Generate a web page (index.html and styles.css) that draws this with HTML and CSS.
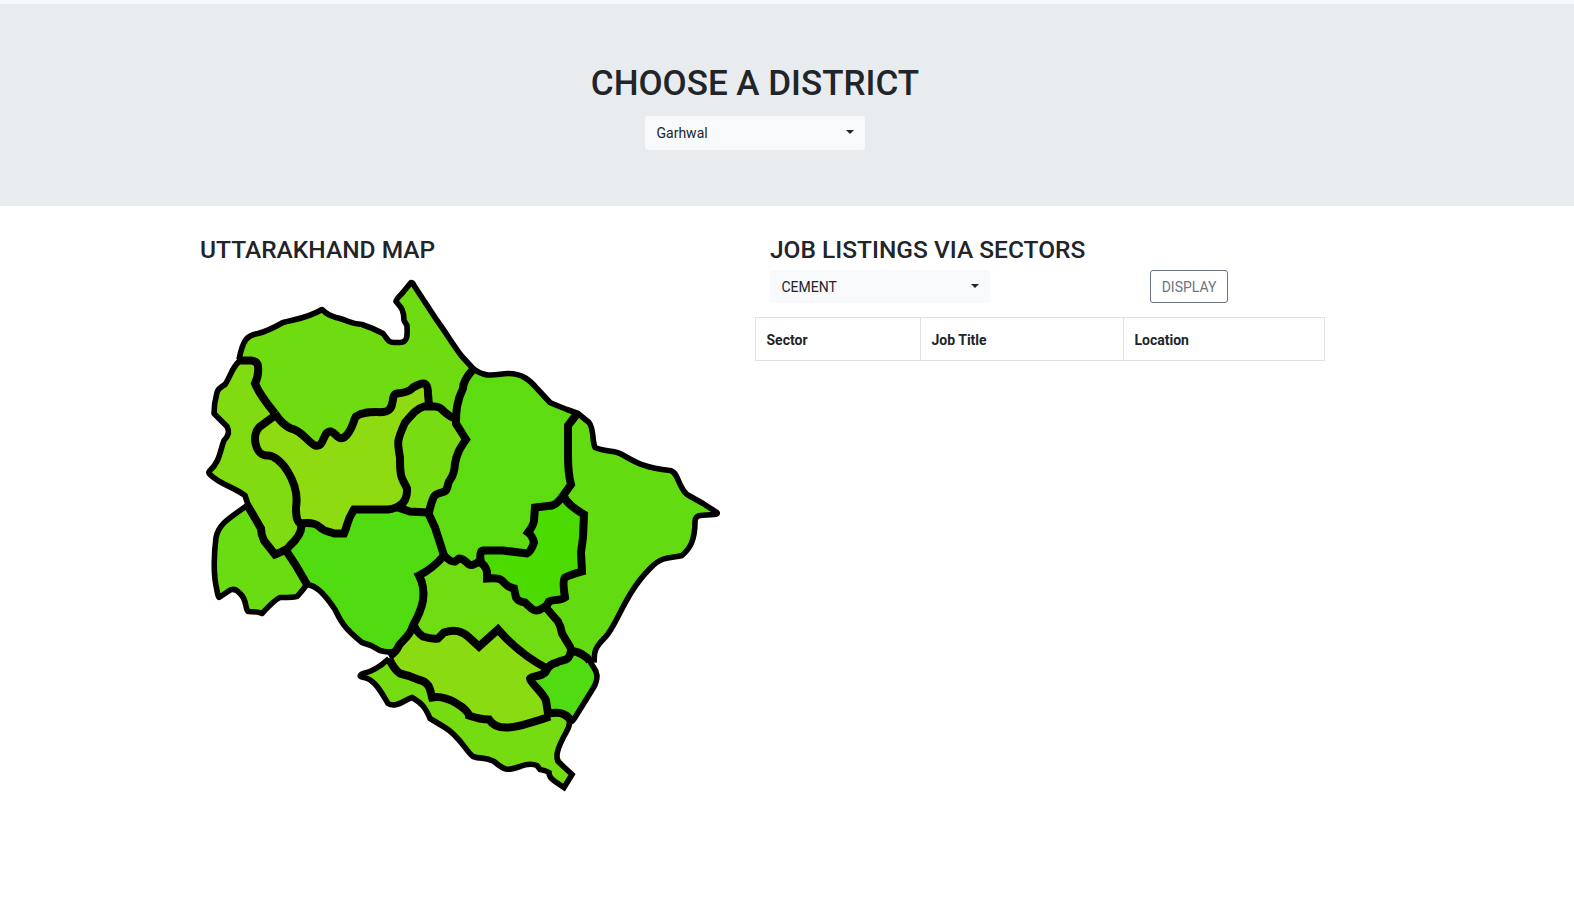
FILE: index.html
```html
<!DOCTYPE html>
<html lang="en">
<head>
<meta charset="utf-8">
<title>Uttarakhand Jobs</title>
<link rel="stylesheet" href="styles.css">
</head>
<body>
<header class="hero">
  <div class="container hero-inner">
    <h1 class="hero-title">CHOOSE A DISTRICT</h1>
    <button class="select">Garhwal<span class="caret"></span></button>
  </div>
</header>
<main class="container columns">
  <section class="map-col">
    <h3 class="title">UTTARAKHAND MAP</h3>
    <svg class="map" viewBox="200 269.5 530 530" width="530" height="530">
      <g>
        <path fill="#6edc10" d="M239 360L243 345 246 339 251 335 258 333 273 328 283 322 300 319 322 309 332 316 340 318 351 322 362 324 383 333 388 339 394 342 402 342 407 332 407 325 403 313 396 301 411 282 437 320 462 357 473 369 465 382 458 400 457 418 437 406 428 405 428 393 421 382 405 391 395 393 390 408 360 413 352 427 340 438 331 430 317 445 297 429 275 413 255 383 258 363Z"/>
        <path fill="#80db11" d="M239 360L253 361 258 363 255 383 275 413 258 428 254 443 263 454 278 461 294 487 297 520 301 525 290 545 275 554 262 537 262 528 248 505 245 495 217 479 209 472 217 462 224 438 228 430 214 413 217 392 225 384Z"/>
        <path fill="#8fdb11" d="M275 413L297 429 317 445 331 430 340 438 352 427 354 417 372 411 390 408 395 393 405 391 421 382 428 393 428 406 415 411 405 422 398 445 401 473 407 488 398 508 354 509 344 533 323 529 300 523 297 520 294 487 278 461 263 454 254 443 258 428Z"/>
        <path fill="#78dc12" d="M457 418L442 408 423 406 415 411 405 422 398 445 401 473 407 488 407 498 398 508 428 512 435 494 447 490 457 455 466 440 455 423Z"/>
        <path fill="#5cdc11" d="M473 369L479 373 493 375 508 373 527 378 550 402 578 413 568 425 568 467 572 482 560 499 535 507 534 523 528 532 534 542 527 553 485 549 480 562 472 566 444 555 428 512 435 494 447 490 457 455 466 440 455 423 458 400Z"/>
        <path fill="#62dc11" d="M578 413L590 423 594 445 620 453 650 467 674 472 687 494 717 512 698 515 694 533 687 550 682 555 665 557 640 578 617 617 598 645 594 662 571 649 560 623 545 606 565 598 563 580 582 572 584 514 564 497 572 482 568 425Z"/>
        <path fill="#4bdb00" d="M564 497L584 514 581 552 582 572 563 580 565 598 550 600 537 611 517 599 513 587 500 578 487 577 480 562 480 552 485 549 527 553 534 542 528 532 535 507Z"/>
        <path fill="#50dc11" d="M301 525L315 523 344 533 354 509 398 508 428 512 444 555 419 575 423 600 410 632 393 653 380 650 362 642 338 617 322 593 307 584 286 550Z"/>
        <path fill="#6adc12" d="M247 505L262 537 275 554 286 550 307 584 297 596 280 597 262 613 248 611 245 600 234 589 218 596 214 557 220 528Z"/>
        <path fill="#70dc12" d="M444 555L472 566 480 562 487 577 500 578 513 587 517 599 537 611 545 606 560 623 571 649 567 657 547 667 517 648 498 630 479 647 458 631 445 631 438 638 425 636 413 625 423 600 419 575Z"/>
        <path fill="#8adb12" d="M413 625L425 636 438 638 445 631 458 631 479 647 498 630 517 648 547 667 544 673 531 678 547 703 549 715 515 727 498 726 488 718 470 716 450 699 432 696 430 685 400 673 390 657Z"/>
        <path fill="#50dc11" d="M571 649L592 662 597 678 593 688 571 722 563 713 549 713 531 680 544 673 548 667Z"/>
        <path fill="#75dc11" d="M390 657L400 673 430 685 432 696 450 699 470 716 488 718 498 726 515 727 549 713 563 713 570 722 557 753 572 774 564 787 549 773 530 764 508 769 490 759 473 756 445 727 430 718 412 697 392 705 378 688 361 676Z"/>
      </g>
      <g class="outline">
        <path d="M239 359Q242 344 246 339Q250 334 258 333Q267 331 283 322C294 319 307 318 322 309C330 317 334 316 340 318C352 322 351 323 362 324Q374 328 383 333C388 339 388 342 394 342H400C409 342 407 331 407 325L404 320C404 308 400 306 396 301Q396 299 402 293L411 282Q413 282 414 285L437 320C446 332 452 343 462 356L473 368C486 378 494 374 508 373C523 373 530 380 537 388L550 402Q552 403 557 405L567 409 578 413 589 422C594 428 592 440 595 447C603 451 614 450 620 453C632 459 640 467 670 470C678 471 678 486 687 494L703 503 717 512Q718 514 714 514L700 515Q695 516 695 521C695 540 690 548 682 555C673 558 663 554 650 568C624 594 617 625 605 637C592 650 595 653 594 662"/>
        <path d="M590 660C592 667 596 667 597 675Q597 682 593 688L575 717Q572 722 570 721"/>
        <path class="sharp" d="M569 718Q571 724 566 732C556 750 556 756 558 761L572 774 564 787 555 781Q549 777 549 772Q546 770 540 769L537 765Q530 762 520 766C508 770 506 771 494 761C485 756 482 759 473 756C466 751 460 736 445 727L430 718C425 706 422 703 412 697C405 699 396 708 388 703C382 693 375 679 364 677Q357 676 363 673Q375 671 389 658"/>
        <path d="M393 651Q386 652 380 650L371 645 362 642C342 626 340 619 335 609C327 597 318 587 311 585L307 584Q300 593 297 596Q295 597 280 597Q275 599 262 613Q258 611 248 611C245 608 247 599 240 593Q234 586 228 591L219 597Q218 597 217 590Q212 570 216 537C219 523 229 518 247 505"/>
        <path d="M249 507L245 495C233 486 220 484 210 474Q208 472 210 470C220 461 220 450 224 440Q231 433 227 426L214 413Q214 403 217 392Q218 388 225 384C230 377 232 367 239 361"/>
      </g>
      <g class="borders">
        <path d="M237 360H251Q258 361 258 366Q259 375 255 383C259 393 266 402 275 413"/>
        <path d="M275 413Q282 424 291 428C302 430 308 442 315 445C325 448 322 430 331 431C337 433 337 440 344 437C353 430 353 420 356 416C366 409 380 413 386 411C396 408 390 394 397 393Q409 392 413 387C426 379 428 384 428 393L429 405"/>
        <path d="M457 419Q449 416 444 411Q440 406 435 406H424C417 408 413 413 405 422C397 440 397 441 400 457C400 480 402 477 407 488Q408 500 398 507L410 511 428 512"/>
        <path d="M473 369Q463 380 463 388C457 400 456 410 456 423L466 439C459 449 457 453 455 463C454 480 449 477 448 484C446 496 440 489 434 496Q431 502 429 512"/>
        <path d="M275 415L260 426C251 434 255 455 267 455C280 454 300 482 296 507C296 520 298 521 301 524"/>
        <path d="M299 523Q314 521 319 526C325 532 330 531 334 533H344C348 525 346 521 354 509H388Q397 508 402 503"/>
        <path d="M301 524Q303 533 290 545Q288 549 275 554L264 540Q261 534 261 528L247 504"/>
        <path d="M286 550L296 565 307 584M428 512L435 527 444 555"/>
        <path d="M444 555Q451 562 455 561L459 558Q462 557 469 564Q473 566 480 560"/>
        <path d="M481 563Q479 550 483 550H503L527 553Q531 551 534 542Q533 536 528 532Q534 524 534 520L535 507 552 505Q556 504 561 498L571 484Q568 473 568 455V425L578 412"/>
        <path d="M564 496Q567 504 584 514L583 537 581 552 582 571Q571 574 565 577Q562 579 565 597C560 601 554 598 549 601Q547 606 542 608C535 613 531 608 525 602Q518 601 516 597L514 588C507 587 506 584 502 580Q499 577 487 578V571Q485 564 480 562"/>
        <path d="M545 606L558 621Q561 626 562 633L571 648"/>
        <path d="M590 661Q585 653 571 650C569 663 562 658 557 662Q549 664 547 669C544 677 531 675 530 678C530 682 543 692 546 700L548 713Q560 711 564 714Q569 716 571 721"/>
        <path d="M444 555Q433 568 419 575Q425 586 423 600Q421 611 413 625C410 636 402 640 399 645Q396 652 389 656"/>
        <path d="M414 625Q417 632 423 636Q432 639 438 638L444 632Q458 627 468 636L479 646 498 629C512 645 526 657 547 668"/>
        <path d="M389 658Q394 669 400 673Q409 675 418 679C431 682 430 690 432 697C448 694 468 709 469 715Q480 719 489 719Q495 728 508 727Q518 727 550 716"/>
      </g>
    </svg>
  </section>
  <section class="jobs-col">
    <div class="jobs-head">
      <h3 class="title">JOB LISTINGS VIA SECTORS</h3>
      <div class="controls">
        <button class="select select-sector">CEMENT<span class="caret"></span></button>
        <button class="display-btn">DISPLAY</button>
      </div>
    </div>
    <table class="jobs">
      <thead><tr><th class="c-sector">Sector</th><th class="c-title">Job Title</th><th>Location</th></tr></thead>
    </table>
  </section>
</main>
</body>
</html>
```
FILE: styles.css
```css
* { box-sizing: border-box; }
body {
  margin: 0;
  border-top: 4px solid #f8f9fa;
  font-family: Roboto, sans-serif;
  font-size: 14px;
  line-height: 21px;
  color: #212529;
  background: #fff;
}
.container { width: 1140px; margin-left: 185px; }
.hero { height: 202px; padding-top: 59px; background: #e8ecef; }
.hero-inner { display: flex; flex-direction: column; align-items: center; }
.hero-title { margin: 0 0 11px; font-size: 35px; line-height: 42px; font-weight: 500; }
.select {
  display: flex;
  justify-content: space-between;
  align-items: center;
  width: 220px;
  height: 34px;
  padding: 0 11px 0 11.5px;
  border: 0;
  border-radius: 3px;
  background: #f8f9fb;
  color: #212529;
  font: 14px/21px Roboto, sans-serif;
}
.select-sector { height: 33px; padding-top: 1px; }
.caret {
  border-top: 4px solid #212529;
  border-left: 4px solid transparent;
  border-right: 4px solid transparent;
  margin-bottom: 2px;
}
.columns { display: grid; grid-template-columns: 570px 570px; padding-top: 29px; }
.map-col { padding-left: 15px; }
.title { margin: 0 0 6px; font-size: 24.5px; line-height: 29px; font-weight: 500; }
.map { display: block; }
.outline path, .borders path { fill: none; stroke: #000; stroke-linejoin: round; }
.outline path { stroke-width: 5.6px; }
.outline .sharp { stroke-linejoin: miter; }
.borders path { stroke-width: 8px; stroke-linejoin: miter; }
.jobs-head { padding-left: 15px; }
.controls { display: flex; gap: 160px; }
.display-btn {
  width: 78px;
  height: 33px;
  padding: 1px 0 0;
  border: 1px solid #6c757d;
  border-radius: 3px;
  background: #fff;
  color: #6c757d;
  font: 14px/21px Roboto, sans-serif;
}
.jobs {
  width: 570px;
  margin-top: 14px;
  border-collapse: collapse;
  table-layout: fixed;
}
.jobs th {
  height: 43px;
  padding: 2px 10.5px 0;
  border: 1px solid #dee2e6;
  text-align: left;
  font-weight: 700;
}
.c-sector { width: 165px; }
.c-title { width: 203px; }
```
